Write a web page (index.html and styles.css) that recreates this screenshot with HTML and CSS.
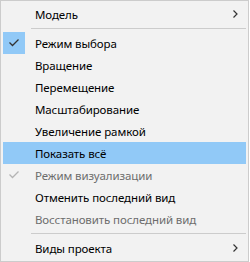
FILE: index.html
```html
<!DOCTYPE html>
<html lang="ru">
<head>
    <meta charset="UTF-8">
    <title>Контекстное меню</title>
    <link rel="stylesheet" href="styles.css">
</head>
<body>
    <div class="menu">
        <div class="item">
            <span class="icon"></span>
            <span class="label">Модель</span>
            <span class="arrow"><svg width="5" height="8" viewBox="0 0 5 8"><path d="M0.5 0.5 L4 4 L0.5 7.5" fill="none" stroke="#333" stroke-width="1.2"/></svg></span>
        </div>
        <div class="sep"></div>
        <div class="item">
            <span class="icon checked"><svg width="10" height="8" viewBox="0 0 10 8"><path d="M0.5 3.5 L3.5 6.5 L9.5 0.5" fill="none" stroke="#333" stroke-width="1.3"/></svg></span>
            <span class="label">Режим выбора</span>
        </div>
        <div class="item">
            <span class="icon"></span>
            <span class="label">Вращение</span>
        </div>
        <div class="item">
            <span class="icon"></span>
            <span class="label">Перемещение</span>
        </div>
        <div class="item">
            <span class="icon"></span>
            <span class="label">Масштабирование</span>
        </div>
        <div class="item">
            <span class="icon"></span>
            <span class="label">Увеличение рамкой</span>
        </div>
        <div class="item active">
            <span class="icon"></span>
            <span class="label">Показать всё</span>
        </div>
        <div class="item disabled">
            <span class="icon"><svg width="10" height="8" viewBox="0 0 10 8"><path d="M0.5 3.5 L3.5 6.5 L9.5 0.5" fill="none" stroke="#b4b4b4" stroke-width="1.3"/></svg></span>
            <span class="label">Режим визуализации</span>
        </div>
        <div class="item">
            <span class="icon"></span>
            <span class="label">Отменить последний вид</span>
        </div>
        <div class="item disabled">
            <span class="icon"></span>
            <span class="label">Восстановить последний вид</span>
        </div>
        <div class="sep"></div>
        <div class="item">
            <span class="icon"></span>
            <span class="label">Виды проекта</span>
            <span class="arrow"><svg width="5" height="8" viewBox="0 0 5 8"><path d="M0.5 0.5 L4 4 L0.5 7.5" fill="none" stroke="#333" stroke-width="1.2"/></svg></span>
        </div>
    </div>
</body>
</html>
```

FILE: styles.css
```css
body {
    margin: 0;
    font-family: "Noto Sans", "Open Sans", sans-serif;
    font-size: 11.5px;
    letter-spacing: -0.1px;
    background: #fff;
}
.menu {
    width: 243px;
    padding: 2px;
    background-color: #f2f2f2;
    border: 1px solid #cccccc;
    color: #000;
}
.item {
    display: flex;
    align-items: center;
    height: 22px;
}
.item.active {
    background-color: #91c9f7;
}
.item.disabled {
    color: #6d6d6d;
}
.icon {
    width: 22px;
    height: 22px;
    display: flex;
    align-items: center;
    justify-content: center;
    margin-right: 10px;
}
.icon.checked {
    background-color: #91c9f7;
}
.label {
    flex: 1;
    white-space: nowrap;
}
.arrow {
    width: 13px;
    display: flex;
    align-items: center;
}
.sep {
    height: 1px;
    margin: 3px 0 3px 28px;
    background-color: #cccccc;
}
```
